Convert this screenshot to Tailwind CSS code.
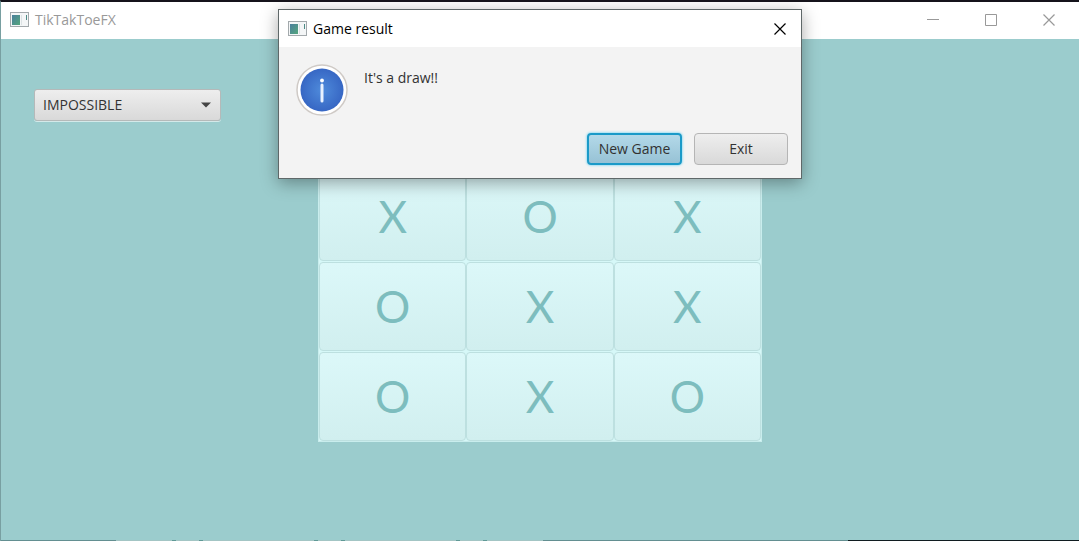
<!DOCTYPE html>
<html lang="en">
<head>
<meta charset="utf-8">
<title>TikTakToeFX</title>
<script src="https://cdn.jsdelivr.net/npm/@tailwindcss/browser@4"></script>
</head>
<body class="relative flex min-h-screen flex-col overflow-hidden border-t-2 border-l border-t-[#15131b] border-l-[#789fa1] bg-[#9bcccd] font-['Open_Sans','Noto_Sans',sans-serif] text-sm text-[#323232]">
  <svg class="absolute size-0" aria-hidden="true">
    <defs>
      <linearGradient id="pane" x1="0" y1="0" x2="1" y2="1"><stop offset="0" stop-color="#4a7f9c"/><stop offset="1" stop-color="#55a67d"/></linearGradient>
      <radialGradient id="blue"><stop offset="0" stop-color="#4f8bdb"/><stop offset="1" stop-color="#3767c4"/></radialGradient>
      <symbol id="app" viewBox="0 0 19 16">
        <rect x=".5" y=".5" width="18" height="14" fill="#f4f6f7" stroke="#a3a9ac"/>
        <rect x="2" y="3" width="8" height="10" fill="url(#pane)"/>
        <path d="M11.5 3v10" stroke="#dce2e4"/><path d="M16.5 3v5" stroke="#4d8b86"/>
      </symbol>
    </defs>
  </svg>

  <header class="flex h-[37px] items-center bg-white pr-[24px] pb-px pl-[9px]">
    <svg class="h-4 w-[19px]"><use href="#app"/></svg>
    <h1 class="ml-1.5 text-[#999]">TikTakToeFX</h1>
    <div class="ml-auto flex gap-[46px] text-[#999]">
      <button aria-label="Minimize"><svg class="size-3" viewBox="0 0 12 12" stroke="currentColor"><path d="M0 5.500h12"/></svg></button>
      <button aria-label="Maximize"><svg class="size-3" viewBox="0 0 12 12" fill="none" stroke="currentColor"><path d="M.5.5h11v11H.5z"/></svg></button>
      <button aria-label="Close"><svg class="size-3" viewBox="0 0 12 12" stroke="currentColor" stroke-width="1.200"><path d="m.5.5 11 11m0-11-11 11"/></svg></button>
    </div>
  </header>

  <main class="grid flex-1 grid-cols-[1fr_444px_1fr] items-start">
    <div class="relative mt-[50px] ml-[33px] w-[187px]">
      <select aria-label="Difficulty" class="h-8 w-full appearance-none rounded-[3px] border border-[#b5b9b9] bg-linear-to-b from-[#eeeeee] to-[#d9d9d9] px-2 text-sm text-[#333] shadow-[0_1px_0_#d4e9e9]"><option>IMPOSSIBLE</option></select>
      <svg class="pointer-events-none absolute top-[13px] right-[10px] h-[6px] w-[10px]" viewBox="0 0 10 6" fill="#444"><path d="M0 .5h10L5 5.500z"/></svg>
    </div>
    <div class="mt-[132px] grid grid-cols-3 gap-y-px border border-[#c9eded] bg-[#d6f8f8] font-['Lato',sans-serif] text-[44px] text-[#7dbdbe] *:h-[89px] *:rounded-[4px] *:border *:border-[#bde0e0] *:bg-linear-to-b *:from-[#dcf8f9] *:to-[#d1efef]">
      <button>X</button><button>O</button><button>X</button>
      <button>O</button><button>X</button><button>X</button>
      <button>O</button><button>X</button><button>O</button>
    </div>
  </main>

  <footer class="flex h-px">
    <span class="w-[115px] bg-[#638f91]"></span>
    <span class="w-[427px] bg-[repeating-linear-gradient(to_right,#a3c5c4_0_56px,#5f9996_56px_60px,#a3c5c4_60px_83px,#5f9996_83px_87px,#a3c5c4_87px_142px)]"></span>
    <span class="w-[305px] bg-[#638f91]"></span>
    <span class="flex-1 bg-[#101c20]"></span>
  </footer>

  <section role="dialog" aria-labelledby="result-title" class="absolute inset-x-0 top-[7px] mx-auto w-[524px] border border-[#5f6869] bg-[#f3f3f3] shadow-[0_4px_16px_rgba(0,0,0,0.35)]">
    <div class="flex h-[37px] items-center bg-white pr-[15px] pl-[9px] text-black">
      <svg class="h-4 w-[19px]"><use href="#app"/></svg>
      <h2 id="result-title" class="ml-1.5">Game result</h2>
      <button aria-label="Close" class="ml-auto"><svg class="size-3" viewBox="0 0 12 12" stroke="currentColor" stroke-width="1.200"><path d="m.5.5 11 11m0-11-11 11"/></svg></button>
    </div>
    <div class="flex gap-4 px-[17px] pt-[17px]">
      <svg class="size-[52px]" viewBox="0 0 52 52" aria-hidden="true">
        <circle cx="26" cy="26" r="25" fill="#fff" stroke="#cfcac6" stroke-width="1.500"/>
        <circle cx="26" cy="26" r="21.500" fill="url(#blue)"/>
        <circle cx="26" cy="16.500" r="1.900" fill="#fff"/>
        <path d="M26 21v16" stroke="#e9f2ff" stroke-width="3" stroke-linecap="round"/>
      </svg>
      <p class="mt-1">It's a draw!!</p>
    </div>
    <div class="flex justify-end gap-3 pt-[17px] pr-[13px] pb-[13px]">
      <button class="h-8 w-[95px] rounded-[4px] border-2 border-[#1b9ac8] bg-linear-to-b from-[#b3d9e9] to-[#97c2d5] shadow-[0_0_2px_1px_#a5e0f3]">New Game</button>
      <button class="h-8 w-[94px] rounded-[4px] border border-[#b5b5b5] bg-linear-to-b from-[#eeeeee] to-[#d9d9d9]">Exit</button>
    </div>
  </section>
</body>
</html>
